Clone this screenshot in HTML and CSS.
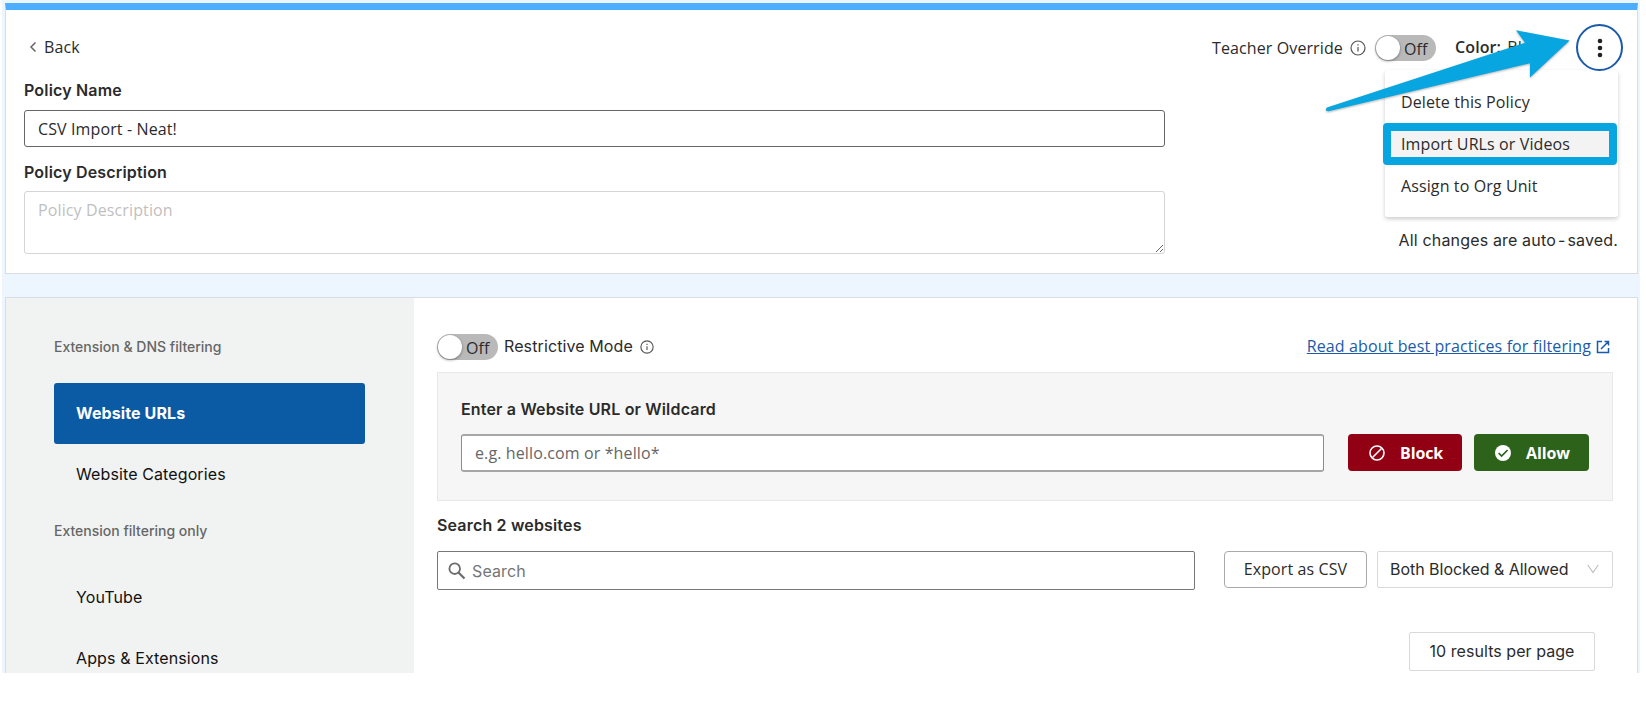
FILE: index.html
```html
<!DOCTYPE html>
<html lang="en">
<head>
    <meta charset="UTF-8">
    <meta name="viewport" content="width=device-width, initial-scale=1.0">
    <title>Edit Policy</title>
    <link rel="stylesheet" href="styles.css">
</head>
<body>
    <div class="app">
        <header class="policy-card">
            <div class="policy-form">
                <a class="back">
                    <svg width="8" height="12" viewBox="0 0 8 12"><path d="M6.5 1.5 2 6l4.500 4.500" fill="none" stroke="#666" stroke-width="1.500"/></svg>
                    <span class="back-text">Back</span>
                </a>
                <label class="label" for="policy-name">Policy Name</label>
                <input class="input policy-name" id="policy-name" type="text" value="CSV Import - Neat!">
                <label class="label desc-label" for="policy-desc">Policy Description</label>
                <textarea class="input policy-desc" id="policy-desc" placeholder="Policy Description"></textarea>
            </div>
            <div class="policy-actions">
                <div class="action-row">
                    <span class="override">Teacher Override</span>
                    <svg class="info" width="16" height="16" viewBox="0 0 16 16"><circle cx="8" cy="8" r="7" fill="none" stroke="#555" stroke-width="1.200"/><path d="M8 7v4.500M8 4.300v1.300" stroke="#555" stroke-width="1.200"/></svg>
                    <div class="toggle"><span class="knob"></span><span class="toggle-text">Off</span></div>
                    <span class="color"><b>Color:</b> Blue</span>
                    <button class="more">
                        <svg width="6" height="20" viewBox="0 0 6 20"><g fill="#222"><circle cx="3" cy="3" r="2.300"/><circle cx="3" cy="10" r="2.300"/><circle cx="3" cy="17" r="2.300"/></g></svg>
                    </button>
                </div>
                <ul class="menu">
                    <li class="menu-item">Delete this Policy</li>
                    <li class="menu-item highlighted">Import URLs or Videos</li>
                    <li class="menu-item">Assign to Org Unit</li>
                </ul>
                <p class="saved">All changes are auto<span class="dash">-</span>saved.</p>
                <svg class="arrow" width="250" height="90" viewBox="0 0 250 90"><path d="M7 80.500 205 15.700 196 3.200 249.700 13.600 210 50.500 210 36.300 8.500 84.200Q4 84 7 80.500z" fill="#08a6e0"/></svg>
            </div>
        </header>

        <div class="filter-card">
            <nav class="sidebar">
                <div class="nav-heading">Extension &amp; DNS filtering</div>
                <a class="nav-item active">Website URLs</a>
                <a class="nav-item">Website Categories</a>
                <div class="nav-heading second">Extension filtering only</div>
                <a class="nav-item">YouTube</a>
                <a class="nav-item">Apps &amp; Extensions</a>
            </nav>
            <main class="content">
                <div class="mode-row">
                    <div class="toggle"><span class="knob"></span><span class="toggle-text">Off</span></div>
                    <span class="mode-text">Restrictive Mode</span>
                    <svg class="mode-info" width="14" height="14" viewBox="0 0 16 16"><circle cx="8" cy="8" r="7" fill="none" stroke="#555" stroke-width="1.300"/><path d="M8 7v4.500M8 4.300v1.300" stroke="#555" stroke-width="1.300"/></svg>
                    <a class="link">Read about best practices for filtering</a>
                    <svg class="external" width="14" height="14" viewBox="0 0 14 14"><path d="M6 1.500H1.500v11h11V8M8.500 1.500h4v4M12.500 1.500 5 9" fill="none" stroke="#1b5aa8" stroke-width="1.500"/></svg>
                </div>
                <section class="url-panel">
                    <label class="label url-label" for="url">Enter a Website URL or Wildcard</label>
                    <div class="url-row">
                        <input class="input url" id="url" type="text" placeholder="e.g. hello.com or *hello*">
                        <button class="btn block">
                            <svg width="16" height="16" viewBox="0 0 16 16"><circle cx="8" cy="8" r="7" fill="none" stroke="#fff" stroke-width="1.600"/><path d="m3.500 12.500 9-9" stroke="#fff" stroke-width="1.600"/></svg>
                            <span class="btn-text">Block</span>
                        </button>
                        <button class="btn allow">
                            <svg width="16" height="16" viewBox="0 0 16 16"><circle cx="8" cy="8" r="8" fill="#fff"/><path d="m3.600 8 3 3 6-6" fill="none" stroke="#2d621b" stroke-width="1.700"/></svg>
                            <span class="btn-text">Allow</span>
                        </button>
                    </div>
                </section>
                <div class="label search-label">Search 2 websites</div>
                <div class="search-row">
                    <div class="search">
                        <svg width="18" height="18" viewBox="0 0 18 18"><circle cx="6.700" cy="6.700" r="5.300" fill="none" stroke="#6b6b6b" stroke-width="1.800"/><path d="m10.500 10.500 6 6" stroke="#6b6b6b" stroke-width="2.200"/></svg>
                        <span class="search-text">Search</span>
                    </div>
                    <button class="export"><span class="export-text">Export as CSV</span></button>
                    <div class="select">
                        <span class="select-text">Both Blocked &amp; Allowed</span>
                        <svg width="12" height="10" viewBox="0 0 12 10"><path d="m.8 1 5.200 7.500L11.200 1" fill="none" stroke="#bfbfbf" stroke-width="1.200"/></svg>
                    </div>
                </div>
                <div class="page-size"><span class="page-text">10 results per page</span></div>
            </main>
        </div>
    </div>
</body>
</html>
```
FILE: styles.css
```css
* {
    box-sizing: border-box;
}
body {
    margin: 0;
    background: #fff;
    font-family: "Open Sans", sans-serif;
    font-size: 16px;
    line-height: 24px;
    letter-spacing: 0.11px;
    color: #2b2b2b;
}
button {
    font: inherit;
    color: inherit;
    letter-spacing: inherit;
    padding: 0;
}
svg {
    flex: none;
}
.app {
    width: 1638px;
    height: 673px;
    margin-left: 2px;
    padding: 3px 2px 0 3px;
    background: #edf5fe;
    overflow: hidden;
}
.policy-card {
    display: flex;
    justify-content: space-between;
    height: 271px;
    padding: 0 19px 0 18px;
    background: #fff;
    border: 1px solid #d9dde1;
    border-top: 7px solid #4dadff;
}
.policy-form {
    display: flex;
    flex-direction: column;
    width: 1141px;
    padding-top: 25px;
}
.back {
    display: flex;
    align-items: center;
    gap: 7px;
    height: 24px;
    padding-left: 5px;
}
.label {
    font-family: Inter, sans-serif;
    font-weight: 600;
    letter-spacing: 0.17px;
}
.policy-form .label {
    margin-top: 19px;
}
.policy-form .desc-label {
    margin-top: 13px;
}
.input {
    display: block;
    width: 100%;
    padding: 0 13px;
    border: 1px solid #666;
    border-radius: 3px;
    background: #fff;
    font-family: "Open Sans", sans-serif;
    font-size: 16px;
    letter-spacing: 0.12px;
    color: #2b2b2b;
    outline: none;
}
.policy-name {
    height: 37px;
    margin-top: 8px;
}
.policy-desc {
    height: 63px;
    margin-top: 7px;
    padding-top: 6px;
    border-color: #d5d5d5;
    line-height: 24px;
}
.policy-desc::placeholder {
    color: #bfbfbf;
}
.policy-actions {
    position: relative;
    width: 420px;
    padding-top: 14px;
}
.action-row {
    display: flex;
    align-items: center;
    height: 46px;
}
.override {
    flex: none;
    margin: 2px 0 0 14px;
}
.info {
    margin: 1px 9px 0 auto;
}
.toggle {
    display: flex;
    align-items: center;
    flex: none;
    gap: 4px;
    width: 61px;
    height: 26px;
    padding-left: 1px;
    border-radius: 13px;
    background: #b9b9b9;
}
.toggle-text {
    margin-top: 2px;
}
.knob {
    width: 24px;
    height: 24px;
    border-radius: 50%;
    background: #fff;
    box-shadow: 0 1px 3px rgba(0, 0, 0, 0.4);
}
.action-row .toggle {
    margin-top: 1px;
}
.color {
    flex: none;
    width: 90px;
    margin: -1px 0 0 19px;
}
.color b {
    margin-right: 2px;
    font-weight: 600;
}
.more {
    position: relative;
    z-index: 1;
    display: flex;
    align-items: center;
    justify-content: center;
    flex: none;
    width: 47px;
    height: 47px;
    margin: 1px -5px 0 31px;
    border: 2px solid #1b5aa8;
    border-radius: 50%;
    background: #fff;
}
.menu {
    position: absolute;
    top: 60px;
    right: 0;
    width: 233px;
    height: 147px;
    margin: 0;
    padding: 11px 0 0;
    list-style: none;
    background: #fff;
    border-radius: 3px;
    box-shadow: 0 2px 4px rgba(0, 0, 0, 0.2);
}
.menu-item {
    height: 42px;
    padding-left: 16px;
    line-height: 42px;
}
.menu-item.highlighted {
    width: 234px;
    height: 42px;
    margin-left: -2px;
    padding-left: 10px;
    border: 8px solid #08a6e0;
    border-radius: 4px;
    background: #f3f3f3;
    line-height: 26px;
}
.saved {
    margin: 158px 0 0;
    font-family: Inter, sans-serif;
    letter-spacing: 0.16px;
    text-align: right;
    white-space: nowrap;
}
.dash {
    padding: 0 2px;
}
.arrow {
    position: absolute;
    z-index: 2;
    top: 17px;
    right: 48px;
    filter: drop-shadow(0 1px 1px rgba(0, 0, 0, 0.3));
}
.filter-card {
    display: flex;
    height: 420px;
    margin-top: 23px;
    background: #fff;
    border: 1px solid #d9dde1;
}
.sidebar {
    flex: none;
    width: 408px;
    padding: 37px 49px 0 48px;
    background: #f1f3f2;
    font-family: Inter, sans-serif;
    color: #111;
}
.nav-heading {
    height: 24px;
    margin-bottom: 24px;
    font-size: 14px;
    font-weight: 500;
    letter-spacing: 0;
    color: #666;
}
.nav-heading.second {
    margin: 14px 0 24px;
}
.nav-item {
    display: block;
    height: 61px;
    padding-left: 22px;
    line-height: 61px;
}
.nav-item.active {
    background: #0b5aa4;
    border-radius: 3px;
    font-weight: 700;
    color: #fff;
}
.content {
    flex: 1;
    padding: 36px 24px 0 23px;
}
.mode-row {
    display: flex;
    align-items: center;
    height: 26px;
}
.mode-text {
    margin: -2px 0 0 6px;
    font-family: Inter, sans-serif;
}
.mode-info {
    margin-left: 7px;
}
.link {
    margin: -2px 5px 0 auto;
    color: #1b5aa8;
    text-decoration: underline;
}
.external {
    margin-right: 3px;
}
.url-panel {
    height: 129px;
    margin-top: 12px;
    padding: 24px 23px 0;
    background: #f6f6f6;
    border: 1px solid #e8e8e8;
}
.url-label {
    display: block;
}
.url-row {
    display: flex;
    margin-top: 13px;
}
.url {
    flex: 1;
    height: 38px;
    border: 1px solid #8c8c8c;
    border-top: 2px solid #a6a6a6;
    border-bottom: 2px solid #a6a6a6;
}
.url::placeholder {
    color: #666;
}
.btn {
    display: flex;
    align-items: center;
    gap: 15px;
    width: 115px;
    height: 37px;
    padding-left: 21px;
    border: none;
    border-radius: 4px;
    color: #fff;
    font-weight: 700;
    letter-spacing: -0.1px;
}
.block {
    width: 114px;
    margin-left: 24px;
    background: #920013;
}
.allow {
    margin-left: 12px;
    background: #2d621b;
}
.search-label {
    margin-top: 12px;
}
.search-row {
    display: flex;
    margin-top: 14px;
}
.search {
    display: flex;
    align-items: center;
    gap: 6px;
    width: 758px;
    height: 39px;
    padding-left: 10px;
    border: 1px solid #777;
    border-radius: 2px;
    color: #757575;
    font-family: Inter, sans-serif;
}
.export {
    width: 143px;
    height: 37px;
    margin-left: 29px;
    padding-bottom: 1px;
    border: 1px solid #aaa;
    border-radius: 4px;
    background: #fff;
}
.select {
    display: flex;
    align-items: center;
    justify-content: space-between;
    width: 236px;
    height: 37px;
    margin-left: 10px;
    padding: 0 13px 1px 12px;
    border: 1px solid #d9d9d9;
    border-radius: 2px;
    font-family: Inter, sans-serif;
    letter-spacing: -0.03px;
}
.page-size {
    width: 186px;
    height: 39px;
    margin: 42px 18px 0 auto;
    border: 1px solid #d9d9d9;
    border-radius: 2px;
    font-family: Inter, sans-serif;
    letter-spacing: 0.05px;
    line-height: 36px;
    text-align: center;
}
```
